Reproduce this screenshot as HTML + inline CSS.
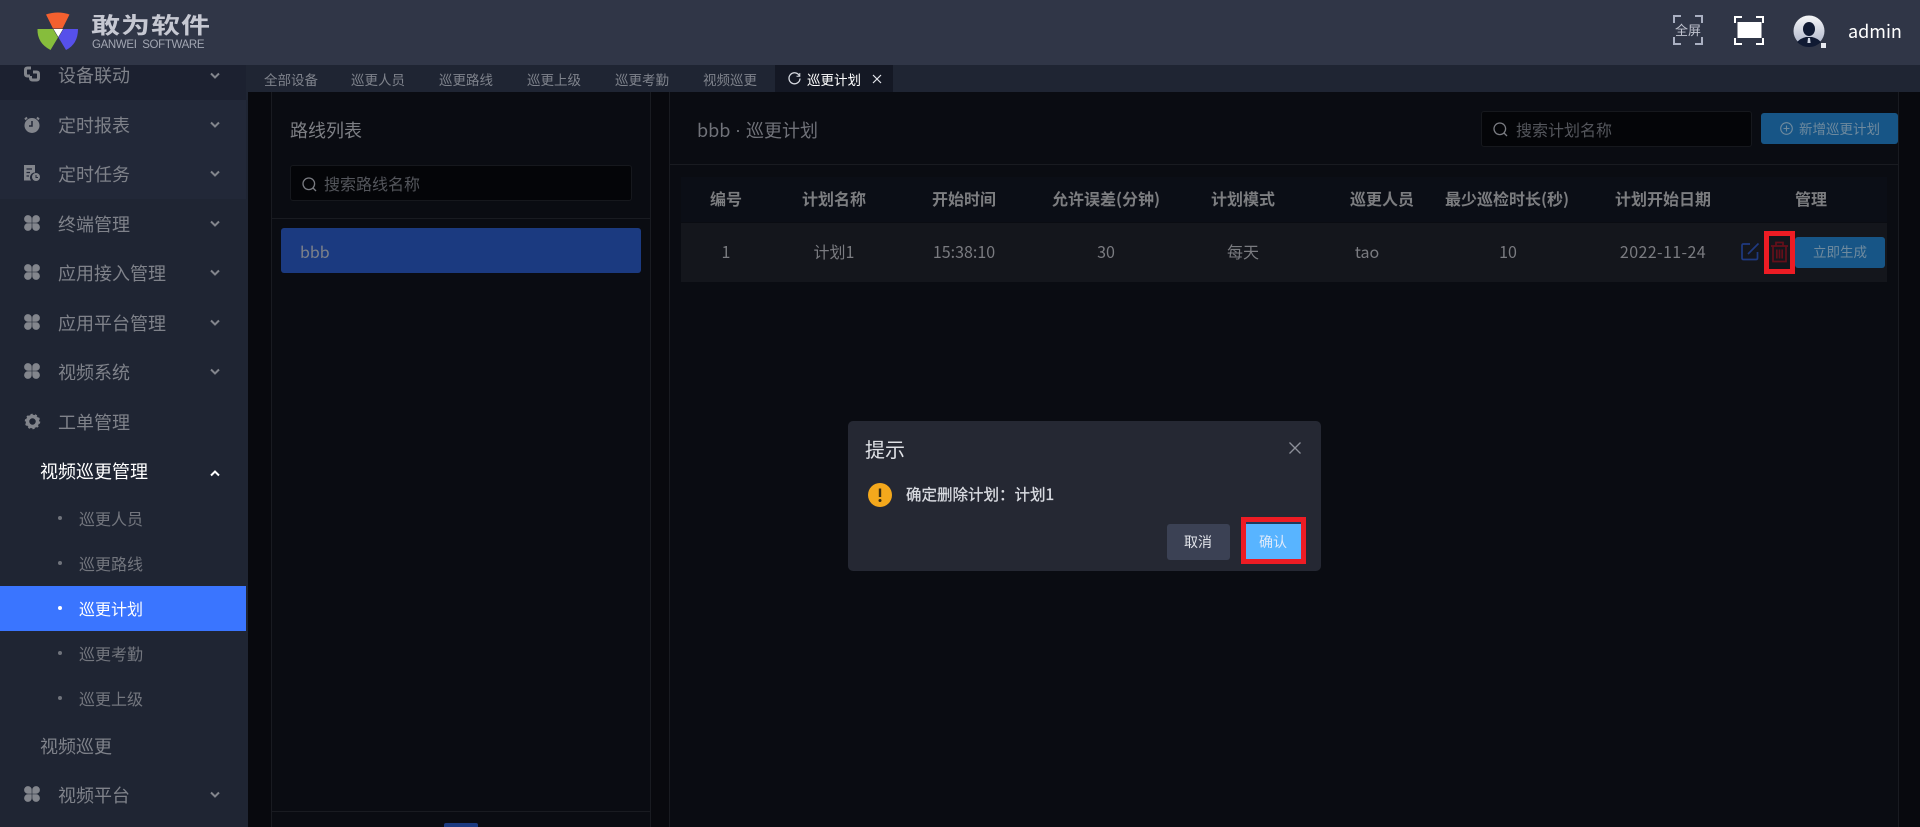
<!DOCTYPE html>
<html lang="zh-CN"><head><meta charset="utf-8"><title>巡更计划</title>
<style>
*{box-sizing:border-box;margin:0;padding:0}
html,body{width:1920px;height:827px;overflow:hidden;background:#0a0c11}
body{position:relative;font-family:"Noto Sans CJK SC","Liberation Sans",sans-serif;color:#7d7f85}
.a,.t,.c{position:absolute}
.t,.c{white-space:nowrap;line-height:1}
.c{transform:translateX(-50%)}
svg{position:absolute;display:block;overflow:visible}
.n{font-size:18px;left:58px;color:#7f828a}
.s{font-size:16px;left:79px;color:#73767e}
.tab{font-size:13.5px;top:73px;color:#7f838c}
.th{font-size:16px;font-weight:700;top:190px;color:#7c7d80}
.td{font-size:16px;top:243px;color:#7a7b80}
.dot{position:absolute;left:58px;width:4px;height:4px;border-radius:50%;background:#6f737b}
.ch{left:209px;width:12px;height:8px}
</style></head><body>

<!-- header -->
<div class="a" style="left:0;top:0;width:1920px;height:65px;background:#303647"></div>
<svg style="left:0;top:0" width="90" height="65" viewBox="0 0 90 65">
<path d="M46 14.5Q58 10.500 69.500 14.500L62.500 28.500H53Z" fill="#f4602f"/>
<path d="M37.500 29H53L58 37.500L50.500 50Q37 43 37.500 29Z" fill="#86bd3c"/>
<path d="M58.500 37.500L63.500 29H78Q78 44 66 50Z" fill="#5650ea"/>
<path d="M53.500 29H63L58.300 37Z" fill="#fff"/>
</svg>
<div class="t" style="left:91px;top:10px;font-size:29px;font-weight:700;letter-spacing:1px;color:#c6c8d2;transform:scaleY(.78)">敢为软件</div>
<div class="t" style="left:92px;top:40px;font-size:11.500px;letter-spacing:-.35px;color:#a2a6b2;font-family:'Liberation Sans',sans-serif">GANWEI&nbsp; SOFTWARE</div>

<svg style="left:1673px;top:15px" width="30" height="30" viewBox="0 0 30 30" fill="none" stroke="#aab0c2" stroke-width="2">
<path d="M1 8V1H8M22 1H29V8M29 22V29H22M8 29H1V22"/>
</svg>
<div class="t" style="left:1675px;top:23px;font-size:13px;color:#c0c3cf">全屏</div>
<svg style="left:1734px;top:16px" width="30" height="29" viewBox="0 0 30 29" fill="none" stroke="#fff" stroke-width="2">
<path d="M1 7V1H8M22 1H29V7M29 22V28H22M8 28H1V22"/>
<rect x="3.500" y="6" width="24" height="16" fill="#fff" stroke="none"/>
</svg>
<svg style="left:1793px;top:15px" width="32" height="32" viewBox="0 0 32 32">
<defs><linearGradient id="av" x1="0" y1="0" x2="0" y2="1"><stop offset="0" stop-color="#f5f6f8"/><stop offset="1" stop-color="#aab2c8"/></linearGradient></defs>
<path d="M28 28H33V33H28Z" fill="#e8eaf0"/>
<circle cx="16" cy="16" r="15.500" fill="url(#av)"/>
<ellipse cx="16" cy="14" rx="6" ry="7" fill="#101a33"/>
<path d="M4 27Q8 23 13 22H19Q24 23 28 27Q23 32 16 32Q9 32 4 27Z" fill="#101a33"/>
<path d="M15 23H17L17.600 28H14.400Z" fill="#cfd4e0"/>
</svg>
<div class="t" style="left:1848px;top:22px;font-size:18px;color:#fff">admin</div>

<!-- sidebar -->
<div class="a" style="left:0;top:65px;width:248px;height:762px;background:#1f2533"></div>
<div class="a" style="left:0;top:65px;width:246px;height:35px;background:#1c2130"></div>
<div class="a" style="left:0;top:100px;width:246px;height:99px;background:#222838"></div>
<div class="a" style="left:0;top:586px;width:246px;height:45px;background:#3a75ff"></div>

<svg style="left:24px;top:66px" width="16" height="16" viewBox="0 0 16 16" fill="none" stroke="#82858c" stroke-width="3"><path d="M7 2H3.500Q1.500 2 1.500 4V8Q1.500 10 3.500 10H6"/><path d="M9 6H12.500Q14.500 6 14.500 8V12Q14.500 14 12.500 14H8.500Q6.500 14 6.500 12V10"/></svg>
<svg style="left:24px;top:116px" width="16" height="17" viewBox="0 0 16 17"><circle cx="8" cy="9.500" r="7.500" fill="#82858c"/><path d="M3 1.500L1 3.500M13 1.500L15 3.500" stroke="#82858c" stroke-width="2"/><path d="M8 5V10H5" stroke="#222838" stroke-width="1.500" fill="none"/></svg>
<svg style="left:24px;top:165px" width="16" height="16" viewBox="0 0 16 16"><path d="M0 0H11V7.500A5 5 0 0 0 7 15.500H0Z" fill="#82858c"/><path d="M2.500 4H8M2.500 7.500H6M2.500 11H5" stroke="#222838" stroke-width="1.300"/><circle cx="12" cy="12" r="4" fill="#82858c"/><path d="M12 10V12.500H14" stroke="#222838" stroke-width="1" fill="none"/></svg>
<svg width="0" height="0"><defs><g id="clover"><path d="M7.700 7.700H3.800A3.800 3.800 0 1 1 7.700 3.800Z"/><path d="M8.300 7.700V3.800A3.800 3.800 0 1 1 12.200 7.700Z"/><path d="M7.700 8.300V12.200A3.800 3.800 0 1 1 3.800 8.300Z"/><path d="M8.300 8.300H12.200A3.800 3.800 0 1 1 8.300 12.200Z"/></g></defs></svg>
<svg style="left:24px;top:215px" width="16" height="16" viewBox="0 0 16 16" fill="#82858c"><use href="#clover"/></svg>
<svg style="left:24px;top:264px" width="16" height="16" viewBox="0 0 16 16" fill="#82858c"><use href="#clover"/></svg>
<svg style="left:24px;top:314px" width="16" height="16" viewBox="0 0 16 16" fill="#82858c"><use href="#clover"/></svg>
<svg style="left:24px;top:363px" width="16" height="16" viewBox="0 0 16 16" fill="#82858c"><use href="#clover"/></svg>
<svg style="left:25px;top:414px" width="15" height="15" viewBox="0 0 15 15"><circle cx="7.500" cy="7.500" r="5" fill="none" stroke="#82858c" stroke-width="3.500"/><circle cx="7.500" cy="7.500" r="7" fill="none" stroke="#82858c" stroke-width="1.500" stroke-dasharray="2.200 2.200"/></svg>
<svg style="left:24px;top:786px" width="16" height="16" viewBox="0 0 16 16" fill="#82858c"><use href="#clover"/></svg>

<div class="t n" style="top:66px">设备联动</div>
<div class="t n" style="top:116px">定时报表</div>
<div class="t n" style="top:165px">定时任务</div>
<div class="t n" style="top:215px">终端管理</div>
<div class="t n" style="top:264px">应用接入管理</div>
<div class="t n" style="top:314px">应用平台管理</div>
<div class="t n" style="top:363px">视频系统</div>
<div class="t n" style="top:413px">工单管理</div>
<div class="t n" style="top:462px;left:40px;color:#fff">视频巡更管理</div>
<div class="t n" style="top:737px;left:40px">视频巡更</div>
<div class="t n" style="top:786px">视频平台</div>
<div class="t s" style="top:510px">巡更人员</div>
<div class="t s" style="top:555px">巡更路线</div>
<div class="t s" style="top:600px;color:#fff">巡更计划</div>
<div class="t s" style="top:645px">巡更考勤</div>
<div class="t s" style="top:690px">巡更上级</div>
<i class="dot" style="top:516px"></i><i class="dot" style="top:561px"></i><i class="dot" style="top:606px;background:#fff"></i><i class="dot" style="top:651px"></i><i class="dot" style="top:696px"></i>

<svg class="ch" style="top:72px" viewBox="0 0 12 8" fill="none" stroke="#82858c" stroke-width="2"><path d="M2 1.500L6 5.500L10 1.500"/></svg>
<svg class="ch" style="top:121px" viewBox="0 0 12 8" fill="none" stroke="#82858c" stroke-width="2"><path d="M2 1.500L6 5.500L10 1.500"/></svg>
<svg class="ch" style="top:170px" viewBox="0 0 12 8" fill="none" stroke="#82858c" stroke-width="2"><path d="M2 1.500L6 5.500L10 1.500"/></svg>
<svg class="ch" style="top:220px" viewBox="0 0 12 8" fill="none" stroke="#82858c" stroke-width="2"><path d="M2 1.500L6 5.500L10 1.500"/></svg>
<svg class="ch" style="top:269px" viewBox="0 0 12 8" fill="none" stroke="#82858c" stroke-width="2"><path d="M2 1.500L6 5.500L10 1.500"/></svg>
<svg class="ch" style="top:319px" viewBox="0 0 12 8" fill="none" stroke="#82858c" stroke-width="2"><path d="M2 1.500L6 5.500L10 1.500"/></svg>
<svg class="ch" style="top:368px" viewBox="0 0 12 8" fill="none" stroke="#82858c" stroke-width="2"><path d="M2 1.500L6 5.500L10 1.500"/></svg>
<svg class="ch" style="top:469px" viewBox="0 0 12 8" fill="none" stroke="#fff" stroke-width="2"><path d="M2 6.500L6 2.500L10 6.500"/></svg>
<svg class="ch" style="top:791px" viewBox="0 0 12 8" fill="none" stroke="#82858c" stroke-width="2"><path d="M2 1.500L6 5.500L10 1.500"/></svg>

<!-- tabs -->
<div class="a" style="left:248px;top:65px;width:1672px;height:27px;background:#1f2533"></div>
<div class="a" style="left:775px;top:65px;width:118px;height:27px;background:#141824"></div>
<div class="t tab" style="left:264px">全部设备</div>
<div class="t tab" style="left:351px">巡更人员</div>
<div class="t tab" style="left:439px">巡更路线</div>
<div class="t tab" style="left:527px">巡更上级</div>
<div class="t tab" style="left:615px">巡更考勤</div>
<div class="t tab" style="left:703px">视频巡更</div>
<div class="t tab" style="left:807px;color:#fff">巡更计划</div>
<svg style="left:788px;top:72px" width="13" height="13" viewBox="0 0 13 13" fill="none" stroke="#d6d9e0" stroke-width="1.300"><path d="M11.500 4A5.500 5.500 0 1 0 12 6.500"/><path d="M11.800 1V4.300H8.500" stroke-width="1"/></svg>
<svg style="left:872px;top:74px" width="10" height="10" viewBox="0 0 10 10" stroke="#e4e6ec" stroke-width="1.200"><path d="M1 1L9 9M9 1L1 9"/></svg>

<!-- main background -->
<div class="a" style="left:248px;top:92px;width:1672px;height:735px;background:#08090e"></div>

<!-- left panel -->
<div class="a" style="left:271px;top:92px;width:380px;height:735px;background:#0a0c12;border-left:1px solid #191b21;border-right:1px solid #191b21"></div>
<div class="t" style="left:290px;top:121px;font-size:18px;color:#7d7f84">路线列表</div>
<div class="a" style="left:290px;top:165px;width:342px;height:36px;background:#040508;border:1px solid #16181d;border-radius:3px"></div>
<svg style="left:302px;top:177px" width="15" height="15" viewBox="0 0 15 15" fill="none" stroke="#7a7c82" stroke-width="1.300"><circle cx="6.800" cy="6.800" r="5.800"/><path d="M11 11L14 14"/></svg>
<div class="t" style="left:324px;top:175px;font-size:16px;color:#54565c">搜索路线名称</div>
<div class="a" style="left:272px;top:218px;width:378px;height:1px;background:#191b21"></div>
<div class="a" style="left:281px;top:228px;width:360px;height:45px;background:#1b3a80;border-radius:3px"></div>
<div class="t" style="left:300px;top:243px;font-size:16px;color:#7d8189">bbb</div>
<div class="a" style="left:272px;top:811px;width:378px;height:1px;background:#191b21"></div>
<div class="a" style="left:444px;top:823px;width:34px;height:4px;background:#1b3a80;border-radius:2px 2px 0 0"></div>

<!-- right panel -->
<div class="a" style="left:669px;top:92px;width:1230px;height:735px;background:#0a0c12;border-left:1px solid #191b21;border-right:1px solid #191b21"></div>
<div class="t" style="left:697px;top:121px;font-size:18px;color:#707279">bbb</div>
<div class="t" style="left:735px;top:121px;font-size:18px;color:#707279;font-family:'Liberation Sans',sans-serif">·</div>
<div class="t" style="left:746px;top:121px;font-size:18px;color:#707279">巡更计划</div>
<div class="a" style="left:1481px;top:111px;width:271px;height:36px;background:#040508;border:1px solid #16181d;border-radius:3px"></div>
<svg style="left:1493px;top:122px" width="15" height="15" viewBox="0 0 15 15" fill="none" stroke="#7a7c82" stroke-width="1.300"><circle cx="6.800" cy="6.800" r="5.800"/><path d="M11 11L14 14"/></svg>
<div class="t" style="left:1516px;top:121px;font-size:16px;color:#54565c">搜索计划名称</div>
<div class="a" style="left:1761px;top:113px;width:137px;height:31px;background:#175586;border-radius:3px"></div>
<svg style="left:1780px;top:122px" width="13" height="13" viewBox="0 0 13 13" fill="none" stroke="#6f8a9e" stroke-width="1.100"><circle cx="6.500" cy="6.500" r="5.800"/><path d="M3.500 6.500H9.500M6.500 3.500V9.500"/></svg>
<div class="t" style="left:1799px;top:122px;font-size:13.500px;color:#6f8a9e">新增巡更计划</div>
<div class="a" style="left:670px;top:164px;width:1228px;height:1px;background:#191b21"></div>

<div class="a" style="left:681px;top:177px;width:1206px;height:45px;background:#0b0e16"></div>
<div class="a" style="left:681px;top:223px;width:1206px;height:59px;background:#14161c"></div>

<div class="c th" style="left:726px">编号</div>
<div class="c th" style="left:834px">计划名称</div>
<div class="c th" style="left:964px">开始时间</div>
<div class="c th" style="left:1106px">允许误差(分钟)</div>
<div class="c th" style="left:1243px">计划模式</div>
<div class="c th" style="left:1382px">巡更人员</div>
<div class="c th" style="left:1507px">最少巡检时长(秒)</div>
<div class="c th" style="left:1663px">计划开始日期</div>
<div class="c th" style="left:1811px">管理</div>

<div class="c td" style="left:726px">1</div>
<div class="c td" style="left:834px">计划1</div>
<div class="c td" style="left:964px">15:38:10</div>
<div class="c td" style="left:1106px">30</div>
<div class="c td" style="left:1243px">每天</div>
<div class="c td" style="left:1367px">tao</div>
<div class="c td" style="left:1508px">10</div>
<div class="c td" style="left:1663px;letter-spacing:.4px">2022-11-24</div>

<svg style="left:1741px;top:242px" width="19" height="19" viewBox="0 0 19 19" fill="none" stroke="#1f3a80" stroke-width="1.700"><path d="M9 2H2.500Q1 2 1 3.500V16Q1 17.500 2.500 17.500H15Q16.500 17.500 16.500 16V10"/><path d="M7 12L17.500 1.500"/></svg>
<svg style="left:1770px;top:241px" width="19" height="22" viewBox="0 0 19 22" fill="none" stroke="#640f1a" stroke-width="1.700"><path d="M1 5H18M6 5V1.500H13V5M3 5V20.500H16V5M6.800 8.500V17.500M9.500 8.500V17.500M12.200 8.500V17.500"/></svg>
<div class="a" style="left:1764px;top:231px;width:31px;height:43px;border:5px solid #ed1c24"></div>
<div class="a" style="left:1795px;top:237px;width:90px;height:31px;background:#175586;border-radius:3px"></div>
<div class="c" style="left:1840px;top:245px;font-size:13.500px;color:#6f8a9e">立即生成</div>

<!-- dialog -->
<div class="a" style="left:848px;top:421px;width:473px;height:150px;background:#252833;border-radius:5px"></div>
<div class="t" style="left:865px;top:439px;font-size:20px;color:#dfe1e6">提示</div>
<svg style="left:1289px;top:442px" width="12" height="12" viewBox="0 0 12 12" stroke="#8d9099" stroke-width="1.300"><path d="M.5.500L11.500 11.500M11.500.500L.5 11.500"/></svg>
<svg style="left:868px;top:483px" width="24" height="24" viewBox="0 0 24 24"><circle cx="12" cy="12" r="12" fill="#f4a81c"/><path d="M12 5.500V14" stroke="#3a2d12" stroke-width="2.400"/><circle cx="12" cy="17.500" r="1.500" fill="#3a2d12"/></svg>
<div class="t" style="left:906px;top:487px;font-size:15.500px;color:#d9dbe1;-webkit-text-stroke:.3px #d9dbe1">确定删除计划：计划1</div>
<div class="a" style="left:1167px;top:524px;width:63px;height:36px;background:#3b4154;border-radius:3px"></div>
<div class="c" style="left:1198px;top:535px;font-size:14px;color:#e2e4ea">取消</div>
<div class="a" style="left:1246px;top:522px;width:55px;height:37px;background:#58b4ff;border-top:2px solid #1d3a5e"></div>
<div class="c" style="left:1273px;top:535px;font-size:14px;color:#dfeafa">确认</div>
<div class="a" style="left:1241px;top:517px;width:65px;height:47px;border:5px solid #ed1c24"></div>
</body></html>
